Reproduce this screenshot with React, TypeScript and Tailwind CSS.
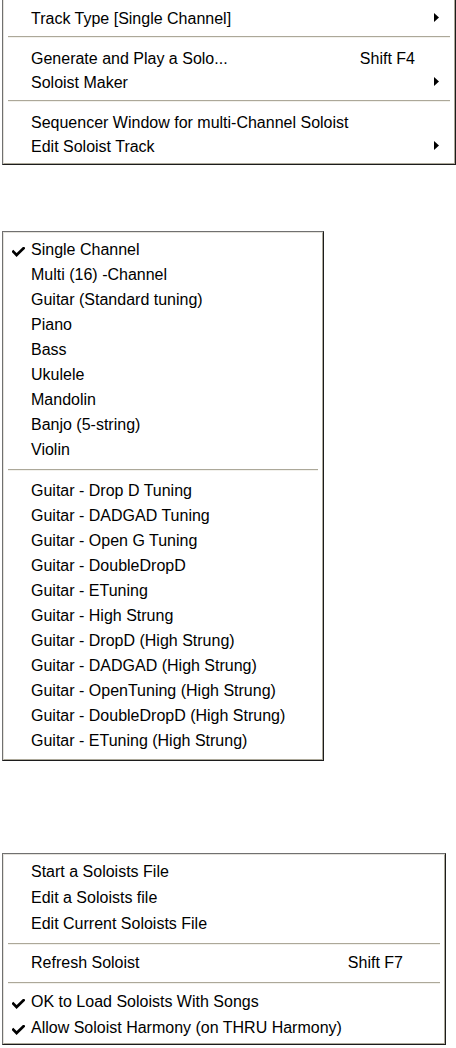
type Item =
    | { kind: 'sep'; h: number; line: number }
    | { kind: 'item'; label: string; shortcut?: string; submenu?: boolean; checked?: boolean };

const trackMenu: Item[] = [
    { kind: 'item', label: 'Track Type [Single Channel]', submenu: true },
    { kind: 'sep', h: 16, line: 5 },
    { kind: 'item', label: 'Generate and Play a Solo...', shortcut: 'Shift F4' },
    { kind: 'item', label: 'Soloist Maker', submenu: true },
    { kind: 'sep', h: 16, line: 5 },
    { kind: 'item', label: 'Sequencer Window for multi-Channel Soloist' },
    { kind: 'item', label: 'Edit Soloist Track', submenu: true },
];

const typeMenu: Item[] = [
    { kind: 'item', label: 'Single Channel', checked: true },
    { kind: 'item', label: 'Multi (16) -Channel' },
    { kind: 'item', label: 'Guitar (Standard tuning)' },
    { kind: 'item', label: 'Piano' },
    { kind: 'item', label: 'Bass' },
    { kind: 'item', label: 'Ukulele' },
    { kind: 'item', label: 'Mandolin' },
    { kind: 'item', label: 'Banjo (5-string)' },
    { kind: 'item', label: 'Violin' },
    { kind: 'sep', h: 16, line: 7 },
    { kind: 'item', label: 'Guitar - Drop D Tuning' },
    { kind: 'item', label: 'Guitar - DADGAD Tuning' },
    { kind: 'item', label: 'Guitar - Open G Tuning' },
    { kind: 'item', label: 'Guitar - DoubleDropD' },
    { kind: 'item', label: 'Guitar - ETuning' },
    { kind: 'item', label: 'Guitar - High Strung' },
    { kind: 'item', label: 'Guitar - DropD (High Strung)' },
    { kind: 'item', label: 'Guitar - DADGAD (High Strung)' },
    { kind: 'item', label: 'Guitar - OpenTuning (High Strung)' },
    { kind: 'item', label: 'Guitar - DoubleDropD (High Strung)' },
    { kind: 'item', label: 'Guitar - ETuning (High Strung)' },
];

const filesMenu: Item[] = [
    { kind: 'item', label: 'Start a Soloists File' },
    { kind: 'item', label: 'Edit a Soloists file' },
    { kind: 'item', label: 'Edit Current Soloists File' },
    { kind: 'sep', h: 13, line: 6 },
    { kind: 'item', label: 'Refresh Soloist', shortcut: 'Shift F7' },
    { kind: 'sep', h: 13, line: 6 },
    { kind: 'item', label: 'OK to Load Soloists With Songs', checked: true },
    { kind: 'item', label: 'Allow Soloist Harmony (on THRU Harmony)', checked: true },
];

function Check() {
    return (
        <svg width="13" height="10" viewBox="0 0 13 10" className="mt-[4px]">
            <path d="M1.3 4.6 L4.6 8 L11.6 1.2" fill="none" stroke="#000" strokeWidth="2.7" strokeLinecap="square" />
        </svg>
    );
}

function Arrow() {
    return (
        <svg width="5" height="9" viewBox="0 0 5 9" className="mb-[4px]">
            <path d="M0 0 L5 4.5 L0 9 Z" fill="#000" />
        </svg>
    );
}

function Menu({ items, rowH, width, rightCol, noTop, pt, pb }: {
    items: Item[];
    rowH: number;
    width: number;
    rightCol: number;
    noTop?: boolean;
    pt: number;
    pb: number;
}) {
    return (
        <div
            className={`ml-[2px] border border-l-[#707070] border-t-[#707070] border-r-[#1c1c1c] border-b-[#1c1c1c] ${noTop ? 'border-t-0' : ''}`}
            style={{ width }}
        >
            <div
                className={`border border-l-[#e4e2dc] border-t-[#e4e2dc] border-r-[#aca899] border-b-[#aca899] bg-white ${noTop ? 'border-t-0' : ''}`}
                style={{ paddingTop: pt, paddingBottom: pb }}
            >
                {items.map((it, i) =>
                    it.kind === 'sep' ? (
                        <div key={i} style={{ height: it.h, paddingTop: it.line }}>
                            <div className="mx-[4px] h-px bg-[#aca899]" />
                            <div className="mx-[4px] h-px bg-[#f2f1ec]" />
                        </div>
                    ) : (
                        <div key={i} className="flex items-center text-[16px] text-black" style={{ height: rowH, lineHeight: `${rowH}px` }}>
                            <span className="flex w-[27px] shrink-0 pl-[8px]">{it.checked && <Check />}</span>
                            <span className="flex-1 whitespace-nowrap">{it.label}</span>
                            {it.shortcut && <span className="whitespace-nowrap">{it.shortcut}</span>}
                            <span className="flex shrink-0 justify-end pr-[15px]" style={{ width: rightCol }}>
                                {it.submenu && <Arrow />}
                            </span>
                        </div>
                    )
                )}
            </div>
        </div>
    );
}

export default function App() {
    return (
        <div className="min-h-[1048px] bg-white font-['Liberation_Sans',Arial,sans-serif]">
            <Menu items={trackMenu} rowH={24} width={454} rightCol={39} noTop pt={7} pb={4} />
            <div className="h-[66px]" />
            <Menu items={typeMenu} rowH={25} width={322} rightCol={39} pt={4} pb={6} />
            <div className="h-[92px]" />
            <Menu items={filesMenu} rowH={26} width={444} rightCol={41} pt={4} pb={2} />
        </div>
    );
}
